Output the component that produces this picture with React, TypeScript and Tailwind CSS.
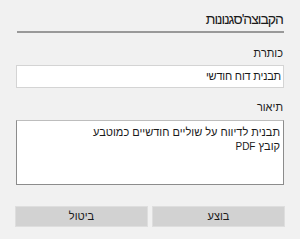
export default function App() {
  return (
    <div
      dir="rtl"
      className="w-[300px] h-[239px] bg-[#f1f1f1] text-[#1a1a1a] px-[16px] pt-[10px] flex flex-col"
      style={{ fontFamily: '"Liberation Sans", "DejaVu Sans", sans-serif' }}
    >
      <h1 className="text-[14px] leading-[18px] h-[21px] pr-[1px] tracking-[-1px]">הקבוצה'סגנונות</h1>
      <div className="h-[2px] bg-[#999999] ml-[1px]" />

      <label className="mt-[13px] text-[11px] leading-[14px] pr-[1px]">כותרת</label>
      <div className="mt-[5px] h-[23px] bg-white border border-[#d4d4d4] flex items-center px-[2px] text-[11px] tracking-[-0.2px]">
        תבנית דוח חודשי
      </div>

      <label className="mt-[12px] text-[11px] leading-[14px] pr-[1px]">תיאור</label>
      <div className="mt-[6px] h-[65px] bg-white border border-[#8c8c8c] border-t-[#bdbdbd] px-[3px] pt-[4px] text-[11px] leading-[14px]">
        <div>תבנית לדיווח על שוליים חודשיים כמוטבע</div>
        <div>
          קובץ <span className="text-[10px]">PDF</span>
        </div>
      </div>

      <div className="mt-[21px] flex gap-[4px] -mr-[1px] ml-[-1px]">
        <button className="flex-1 h-[21px] bg-[#d2d2d2] border border-[#dedede] text-[11px] text-[#1a1a1a]">
          בוצע
        </button>
        <button className="flex-1 h-[21px] bg-[#d2d2d2] border border-[#dedede] text-[11px] text-[#1a1a1a]">
          ביטול
        </button>
      </div>
    </div>
  );
}
